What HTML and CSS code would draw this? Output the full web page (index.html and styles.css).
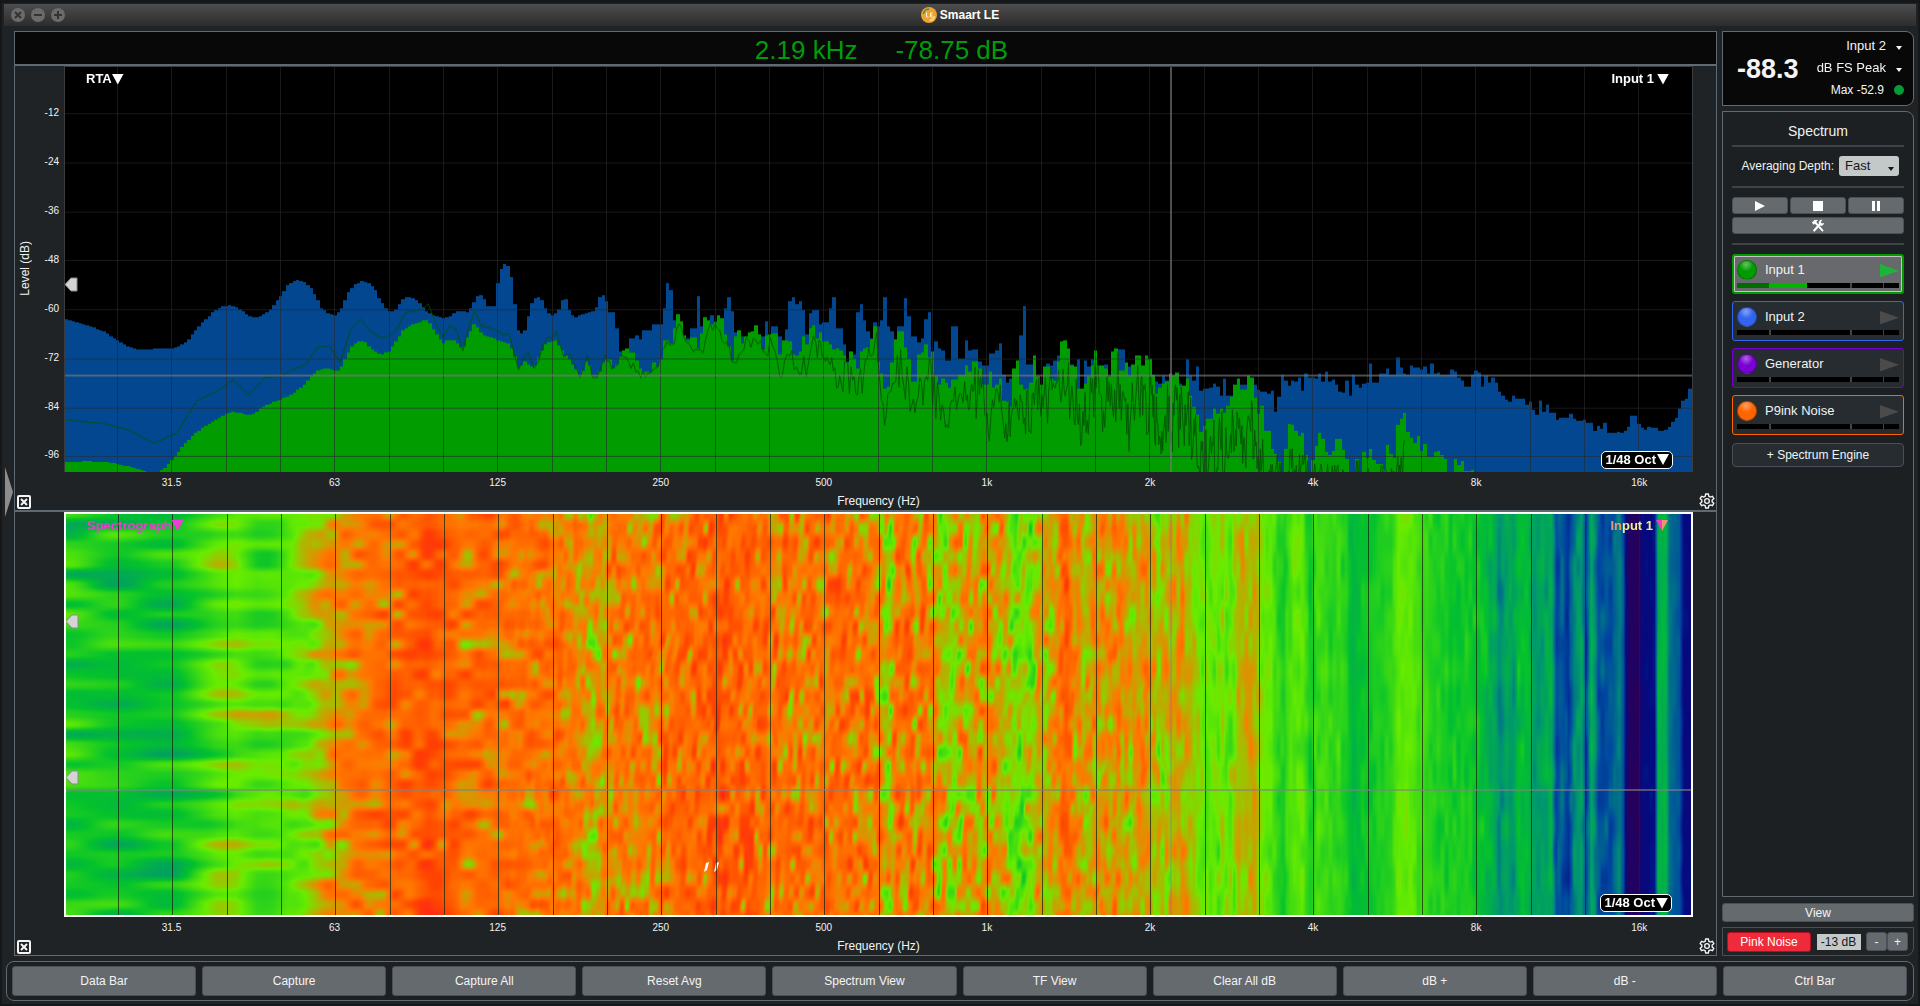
FILE: index.html
```html
<!DOCTYPE html>
<html lang="en">
<head>
<meta charset="utf-8">
<title>Smaart LE</title>
<link rel="stylesheet" href="styles.css">
</head>
<body>
<div class="window">
  <header class="titlebar">
    <div class="window-buttons">
      <button aria-label="Close"><svg viewBox="0 0 14 14"><path d="M4 4l6 6M10 4l-6 6"/></svg></button>
      <button aria-label="Minimize"><svg viewBox="0 0 14 14"><path d="M3 7h8"/></svg></button>
      <button aria-label="Zoom"><svg viewBox="0 0 14 14"><path d="M3 7h8M7 3v8"/></svg></button>
    </div>
    <svg class="app-icon" viewBox="0 0 16 16"><circle cx="8" cy="8" r="8" fill="#efa22d"/><path d="M2.500 7A5.500 5.500 0 0 1 8 2" fill="none" stroke="#2d8f68" stroke-width="1.500"/><path d="M13.500 9a5.500 5.500 0 0 1-5 4.500" fill="none" stroke="#ffdb7c" stroke-width="1.500"/><path d="M5.500 5.500v4.500h2M11.500 6h-2v4h2M9.500 8h2" fill="none" stroke="#fff3d8"/></svg>
    <h1>Smaart LE</h1>
  </header>

  <div class="workspace">
    <button class="drawer-handle" aria-label="Show data bar"><svg viewBox="0 0 8 50"><path d="M0 0L8 25L0 50z" fill="#8d8d8d"/></svg></button>
    <main class="graphs">
      <div class="readout"><span>2.19 kHz</span><span>-78.75 dB</span></div>

      <section class="pane">
        <div class="y-axis">
          <span class="y-title">Level (dB)</span>
          <ol class="y-ticks"><li>-12</li><li>-24</li><li>-36</li><li>-48</li><li>-60</li><li>-72</li><li>-84</li><li>-96</li></ol>
        </div>
        <div class="plot rta">
          <canvas id="rta" width="1627" height="403"></canvas>
          <button class="plot-label at-left">RTA<i class="down"></i></button>
          <button class="plot-label at-right">Input 1<i class="down"></i></button>
          <button class="banding">1/48 Oct<i class="down"></i></button>
          <svg class="marker rta-marker" viewBox="0 0 13 15"><path d="M0 7.500L6 1h6v13H6z"/></svg>
        </div>
        <div class="x-axis">
          <ol class="x-ticks"><li>31.5</li><li>63</li><li>125</li><li>250</li><li>500</li><li>1k</li><li>2k</li><li>4k</li><li>8k</li><li>16k</li></ol>
          <span>Frequency (Hz)</span>
        </div>
        <button class="close-pane" aria-label="Close pane"><svg viewBox="0 0 14 14"><rect x="1" y="1" width="12" height="12" rx="1"/><path d="M4 4l6 6M10 4l-6 6"/></svg></button>
        <button class="pane-settings" aria-label="Pane settings"><svg viewBox="0 0 24 24"><path d="M10 1.500h4l.7 3.300 2.300 1.300 3.200-1.100 2 3.500-2.500 2.200v2.600l2.500 2.200-2 3.500-3.200-1.100-2.300 1.300-.7 3.300h-4l-.7-3.300L7 17.900 3.800 19l-2-3.500 2.500-2.200v-2.600L1.800 8.500l2-3.500L7 6.100l2.300-1.300z"/><circle cx="12" cy="12" r="3.500"/></svg></button>
      </section>

      <section class="pane">
        <div class="y-axis"></div>
        <div class="plot spectrograph">
          <canvas id="spectrograph" width="1625" height="401"></canvas>
          <button class="plot-label at-left magenta">Spectrograph<i class="down"></i></button>
          <button class="plot-label at-right tinted"><b>In</b>put 1<i class="down"></i></button>
          <button class="banding">1/48 Oct<i class="down"></i></button>
          <svg class="marker high-marker" viewBox="0 0 13 15"><path d="M0 7.500L6 1h6v13H6z"/></svg>
          <svg class="marker low-marker" viewBox="0 0 13 15"><path d="M0 7.500L6 1h6v13H6z"/></svg>
        </div>
        <div class="x-axis">
          <ol class="x-ticks"><li>31.5</li><li>63</li><li>125</li><li>250</li><li>500</li><li>1k</li><li>2k</li><li>4k</li><li>8k</li><li>16k</li></ol>
          <span>Frequency (Hz)</span>
        </div>
        <button class="close-pane" aria-label="Close pane"><svg viewBox="0 0 14 14"><rect x="1" y="1" width="12" height="12" rx="1"/><path d="M4 4l6 6M10 4l-6 6"/></svg></button>
        <button class="pane-settings" aria-label="Pane settings"><svg viewBox="0 0 24 24"><path d="M10 1.500h4l.7 3.300 2.300 1.300 3.200-1.100 2 3.500-2.500 2.200v2.600l2.500 2.200-2 3.500-3.200-1.100-2.300 1.300-.7 3.300h-4l-.7-3.300L7 17.900 3.800 19l-2-3.500 2.500-2.200v-2.600L1.800 8.500l2-3.500L7 6.100l2.300-1.300z"/><circle cx="12" cy="12" r="3.500"/></svg></button>
      </section>
    </main>

    <aside class="sidebar">
      <section class="level-meter">
        <strong>-88.3</strong>
        <div class="level-options">
          <div class="picker"><select aria-label="Meter input"><option>Input 2</option></select></div>
          <div class="picker"><select aria-label="Meter scale"><option>dB FS Peak</option></select></div>
          <div class="max">Max -52.9 <i></i></div>
        </div>
      </section>

      <section class="control">
        <h2>Spectrum</h2>
        <hr>
        <div class="averaging">
          <label for="depth">Averaging Depth:</label>
          <div class="picker light"><select id="depth"><option>Fast</option></select></div>
        </div>
        <hr>
        <div class="transport">
          <button aria-label="Play"><svg viewBox="0 0 12 12"><path d="M1 1l10 5-10 5z"/></svg></button>
          <button aria-label="Stop"><svg viewBox="0 0 12 12"><path d="M1 1h10v10H1z"/></svg></button>
          <button aria-label="Pause"><svg viewBox="0 0 12 12"><path d="M2 1h3v10H2zM7 1h3v10H7z"/></svg></button>
          <button class="tools" aria-label="Settings"><svg viewBox="0 0 16 16"><path d="M1 4l3-3h4L6 3.500l8.500 9.500-1.500 1.500L4.500 5.500 3 6.500z"/><path d="M15 4.500a3.500 3.500 0 0 1-4.500 3L4 14.500 2 13 9 5.500A3.500 3.500 0 0 1 13 1l-2 2.500 1.500 1.500z"/></svg></button>
        </div>
        <hr>
        <div class="engines">
          <article class="engine green selected">
            <i class="dot"></i><span>Input 1</span>
            <button aria-label="Run Input 1"><svg viewBox="0 0 17 12"><path d="M0 0l17 6-17 6z"/></svg></button>
            <div class="meter"><b style="width:20%"></b><b style="width:23%"></b></div>
          </article>
          <article class="engine blue">
            <i class="dot"></i><span>Input 2</span>
            <button aria-label="Run Input 2"><svg viewBox="0 0 17 12"><path d="M0 0l17 6-17 6z"/></svg></button>
            <div class="meter"></div>
          </article>
          <article class="engine purple">
            <i class="dot"></i><span>Generator</span>
            <button aria-label="Run Generator"><svg viewBox="0 0 17 12"><path d="M0 0l17 6-17 6z"/></svg></button>
            <div class="meter"></div>
          </article>
          <article class="engine orange">
            <i class="dot"></i><span>P9ink Noise</span>
            <button aria-label="Run P9ink Noise"><svg viewBox="0 0 17 12"><path d="M0 0l17 6-17 6z"/></svg></button>
            <div class="meter"></div>
          </article>
          <button class="add-engine">+ Spectrum Engine</button>
        </div>
      </section>

      <button class="view">View</button>
      <section class="generator">
        <button class="noise">Pink Noise</button>
        <input type="text" value="-13 dB" aria-label="Generator level">
        <div class="steps"><button aria-label="Quieter">-</button><button aria-label="Louder">+</button></div>
      </section>
    </aside>
  </div>

  <nav class="command-bar">
    <button>Data Bar</button><button>Capture</button><button>Capture All</button><button>Reset Avg</button><button>Spectrum View</button><button>TF View</button><button>Clear All dB</button><button>dB +</button><button>dB -</button><button>Ctrl Bar</button>
  </nav>
</div>
<script src="graphs.js"></script>
</body>
</html>
```

FILE: styles.css
```css
* { box-sizing: border-box; }

body {
  margin: 0;
  background: #1f2326;
  color: #f0f2f3;
  font: 12px/16px "Liberation Sans", Arial, sans-serif;
}

button, select, input { font: inherit; color: inherit; margin: 0; padding: 0; border: 0; background: none; }
h1, h2, ol { margin: 0; padding: 0; list-style: none; }
svg, canvas { display: block; }

.window {
  display: flex;
  flex-direction: column;
  min-height: 100vh;
  border: solid #14181b;
  border-width: 3px 2px 2px;
  padding: 1px 2px 3px;
}

.titlebar {
  position: relative;
  display: flex;
  align-items: center;
  justify-content: center;
  gap: 3px;
  height: 22px;
  background: linear-gradient(#4d4d4d, #2c2c2c);
}
.titlebar h1 { font-size: 12px; font-weight: bold; color: #fff; }
.app-icon { width: 16px; height: 16px; }
.window-buttons { position: absolute; left: 7px; top: 4px; display: flex; gap: 6px; }
.window-buttons button { width: 14px; height: 14px; border-radius: 50%; background: #6b6b6b; }
.window-buttons path { stroke: #333; stroke-width: 2; }

.workspace { position: relative; flex: 1; display: flex; gap: 5px; padding: 5px 2px 5px 10px; }
.drawer-handle { position: absolute; left: 1px; top: 441px; width: 8px; height: 50px; }

.graphs { flex: 1; min-width: 0; display: flex; flex-direction: column; border: 1px solid #5f6a72; }
.readout {
  display: flex;
  justify-content: center;
  gap: 38px;
  padding-left: 32px;
  height: 34px;
  border-bottom: 2px solid #5f6a72;
  background: #080808;
  color: #009c0c;
  font-size: 26px;
  line-height: 36px;
}

.pane {
  position: relative;
  flex: 1;
  display: grid;
  grid-template: 1fr 38px / 49px 1fr 23px;
}
.pane + .pane { border-top: 2px solid #5f6a72; }
.y-axis { display: flex; justify-content: space-between; align-items: stretch; padding: 0 5px 0 2px; }
.y-title { align-self: center; writing-mode: vertical-rl; transform: rotate(180deg); }
.y-ticks { flex: 1; display: flex; flex-direction: column; justify-content: space-between; padding: 47px 0 16px; font-size: 10px; text-align: right; }
.y-ticks li { height: 0; line-height: 0; }

.plot { position: relative; min-width: 0; min-height: 0; grid-column: 2; }
.plot canvas { position: absolute; inset: 0; width: 100%; height: 100%; }
.rta { border: solid #3a3d40; border-width: 1px 1px 0; }
.spectrograph { border: 2px solid #fff; }
.x-axis { grid-column: 2; text-align: center; }
.x-axis span { display: block; line-height: 14px; }
.x-ticks { display: flex; justify-content: space-between; padding: 0 3.3% 0 6.6%; font-size: 10px; line-height: 22px; }
.x-ticks li { width: 0; display: flex; justify-content: center; white-space: nowrap; }

.plot-label { position: absolute; top: 4px; display: flex; align-items: center; font-size: 13px; font-weight: bold; color: #fff; }
.at-left { left: 21px; }
.at-right { right: 23px; gap: 3px; }
.down { width: 12px; height: 11px; background: currentColor; clip-path: polygon(0 0, 100% 0, 50% 100%); }
.magenta { color: #f03cd2; }
.tinted { color: #eef08c; gap: 0; }
.tinted b { color: #f0966e; }
.tinted .down { margin-left: 3px; background: linear-gradient(90deg, #f03cc8 50%, #f0966e 50%); }
.banding {
  position: absolute; right: 19px; bottom: 3px;
  display: flex; align-items: center; gap: 1px;
  padding: 0 3px;
  border: 1px solid #fff; border-radius: 5px;
  background: #000; color: #fff;
  font-size: 13px; font-weight: bold;
}
.marker { position: absolute; left: 0; width: 13px; height: 15px; fill: #d4d4d4; stroke: #8a8a8a; }
.rta-marker { top: 52%; }
.high-marker { top: 25%; }
.low-marker { top: 64%; }

.close-pane, .pane-settings { position: absolute; bottom: 1px; fill: none; stroke: #f4f4f4; }
.close-pane { left: 2px; width: 14px; height: 14px; stroke-width: 2; }
.pane-settings { right: 1px; width: 16px; height: 16px; stroke-width: 2; }

.sidebar { width: 192px; display: flex; flex-direction: column; gap: 5px; }
.level-meter {
  display: flex; justify-content: space-between;
  height: 75px;
  padding: 3px 9px 0 14px;
  border: 1px solid #5f6a72; border-radius: 0 8px 8px 0;
  background: #080808; color: #f4f4f4;
}
.level-meter strong { font-size: 27px; line-height: 68px; }
.level-options { display: flex; flex-direction: column; font-size: 13px; line-height: 22px; align-items: flex-end; }
.picker { position: relative; display: flex; }
.picker select { appearance: none; height: 22px; padding-right: 18px; text-align-last: right; }
.picker::after { content: ""; position: absolute; right: 2px; top: 11px; border: 3px solid transparent; border-top: 4px solid currentColor; border-bottom: 0; pointer-events: none; }
.max { display: flex; align-items: center; gap: 10px; font-size: 12px; }
.max i { width: 10px; height: 10px; border-radius: 50%; background: #049a36; }

.control { flex: 1; padding: 10px 9px; border: 1px solid #5f6a72; border-radius: 0 8px 0 0; background: #1c2022; }
.control h2 { font-size: 14px; font-weight: normal; line-height: 18px; text-align: center; margin-bottom: 5px; }
.control hr { height: 2px; margin: 0; border: 0; background: #3d4348; }
.averaging { display: flex; justify-content: flex-end; align-items: center; gap: 5px; padding: 9px 5px 10px 0; white-space: nowrap; }
.light { border-radius: 3px; background: #c3c8c8; color: #14181a; font-size: 13px; }
.light select { width: 60px; height: 20px; padding: 0 0 0 6px; text-align-last: left; }
.light::after { right: 5px; }
.transport { display: grid; grid-template-columns: repeat(3, 1fr); gap: 3px 2px; padding: 9px 0; }
.transport button, .view, .steps button, .command-bar button { border: 1px solid #495057; border-radius: 3px; background: #656a6f; color: #f4f4f4; }
.transport button { display: flex; align-items: center; justify-content: center; height: 17px; fill: #fff; }
.transport svg { width: 12px; height: 12px; }
.transport .tools { grid-column: span 3; }
.tools svg { width: 14px; height: 14px; }

.engines { display: flex; flex-direction: column; gap: 7px; padding-top: 9px; }
.engine {
  display: grid;
  grid-template: 26px 5px / 20px 1fr 17px;
  align-items: center;
  column-gap: 8px;
  height: 40px;
  padding: 2px 4px 0;
  border: 1px solid var(--hue); border-radius: 3px;
  background: #272c30;
  font-size: 13px;
}
.selected { background: #67696c; border-width: 2px; padding: 1px 3px 0; box-shadow: inset 0 0 0 1px #c4c4c4; }
.green { --hue: #009c00; }
.blue { --hue: #3264f0; }
.purple { --hue: #7800d2; }
.orange { --hue: #ff6400; }
.dot { width: 20px; height: 20px; border-radius: 50%; background: radial-gradient(circle at 45% 20%, #ffffff66, #ffffff00 40%), var(--hue); border: 1px solid #00000044; }
.engine button { height: 12px; margin-left: -2px; fill: #4b4b4b; }
.selected button { fill: #1eb43c; }
.meter {
  grid-column: span 3;
  height: 5px;
  display: flex;
  background: linear-gradient(90deg, #000 20%, #444 20% 21%, #000 21% 70%, #444 70% 71%, #000 71% 90%, #444 90% 91%, #000 91%);
}
.meter b { background: #006c00; }
.meter b + b { background: #00b400; }
.add-engine { height: 24px; margin-top: 1px; border: 1px solid #495057; border-radius: 4px; background: #272c30; }

.view { height: 19px; margin-top: 1px; }
.generator {
  display: flex; align-items: center; justify-content: space-between;
  height: 29px;
  padding: 0 5px 0 4px;
  border: 1px solid #495057; border-radius: 0 0 8px 0;
}
.noise { width: 84px; height: 20px; border: 1px solid #b40f1e; border-radius: 3px; background: #ee2b3b; color: #fff; }
.generator input { width: 44px; height: 16px; background: #c3c8c8; color: #14181a; text-align: center; }
.steps { display: flex; }
.steps button { width: 21px; height: 19px; }

.command-bar {
  display: grid;
  grid-template-columns: repeat(10, 1fr);
  gap: 6px;
  margin: 0 2px;
  padding: 4px 6px 4px 5px;
  border: 1px solid #5f6a72; border-radius: 8px;
  background: #1c2022;
}
.command-bar button { height: 30px; }
```

FILE: graphs.js
```js
// Frequency grid: 1/3-octave lines, 163 px per octave, 48 bins per octave.
const OCTAVE = 163, LINE_1K = 921.4, BIN = OCTAVE / 48;

let seed = 7;
const random = () => (seed = (seed * 16807) % 2147483647) / 2147483647;

const pairs = text => text.trim().split(/\s+/).map(p => p.split(',').map(Number));
const segment = (offset, scale, text) => pairs(text).map(([x, y]) => [offset + x / scale, y / 3 + 183]);

function sample(points, x, stepped) {
  let i = 0;
  while (i < points.length - 1 && points[i + 1][0] <= x) i++;
  const a = points[i], b = points[i + 1];
  if (stepped || !b || x < a[0]) return a[1];
  return a[1] + (b[1] - a[1]) * (x - a[0]) / (b[0] - a[0]);
}

const low = t => segment(-15, 2.8, t), mid = t => segment(535, 2.8, t), high = t => segment(1075, 2.7034, t);

const peak = [low(`45,203 100,220 150,240 190,267 220,285 250,295 300,292 345,292 365,283 385,268 410,235 435,205 460,180 480,167 500,163 520,166 540,180 560,195 580,199 605,185 625,165 645,135 665,103 680,92 695,88 710,92 730,108 745,135 760,170 780,187 798,192 815,175 835,125 855,98 875,91 895,95 910,113 925,148 945,177 955,182 970,175 985,145 1005,136 1025,145 1045,167 1060,185 1080,195 1105,202 1120,195 1140,180 1170,182 1185,160 1200,130 1212,132 1225,165 1245,165 1250,120 1258,75 1268,40 1280,38 1288,55 1296,98 1304,180 1312,242 1328,247 1340,195 1352,145 1368,138 1380,150 1390,180 1410,193 1425,175 1432,150 1440,138 1448,150 1455,180 1470,200 1495,187 1525,180 1535,155 1542,130 1555,132 1562,165 1568,130`),
mid(`0,131 18,167 28,183 38,188 47,230 56,300 76,260 95,247 104,252 113,264 123,236 142,237 151,220 171,242 180,172 189,97 198,116 208,206 217,260 256,230 266,156 275,136 284,225 294,245 303,215 313,193 322,210 331,250 351,172 360,137 369,180 379,243 388,255 457,210 467,184 474,250 484,226 494,202 503,255 513,268 522,235 532,150 540,137 550,158 560,151 569,177 578,250 588,186 598,177 617,220 627,213 637,226 646,172 655,137 665,232 684,280 693,330 703,310 722,183 731,160 740,208 750,241 760,262 769,213 779,225 788,208 797,137 807,226 817,241 826,270 836,226 846,216 854,142 864,196 874,256 884,265 893,274 902,262 911,204 921,184 930,300 940,271 949,290 959,298 968,327 988,224 998,179 1007,322 1017,268 1027,298 1036,328 1045,294 1055,330 1065,313 1074,343 1084,350 1093,307 1103,298 1121,277 1130,370 1140,393 1149,381 1159,360 1178,252 1187,164 1196,340 1215,345 1225,375 1235,398 1244,345 1254,337 1264,341 1273,328 1283,313 1292,340 1330,345 1340,323 1348,410 1358,328 1368,345 1377,325 1387,400 1405,345 1415,340 1424,375 1454,294 1464,288 1473,345 1483,360 1500,380`),
high(`0,375 45,390 53,396 62,373 71,388 80,400 108,395 117,402 126,325 135,373 144,388 153,345 162,418 173,412 182,410 191,408 200,395 209,405 218,432 227,382 236,432 255,400 310,400 319,413 328,419 346,425 355,418 364,479 373,435 382,369 391,388 400,402 410,388 421,391 430,378 439,418 448,367 457,379 475,382 484,367 493,389 502,360 511,390 520,384 529,400 539,420 548,424 557,387 566,432 575,370 584,400 593,408 602,396 611,393 620,337 629,392 647,388 650,367 667,352 676,368 685,369 695,317 704,347 713,365 722,370 731,343 740,348 758,354 767,346 776,367 786,337 795,365 804,362 813,368 840,355 850,361 859,378 868,388 877,404 895,368 905,357 914,363 923,405 933,373 942,392 951,377 960,394 969,419 978,433 987,443 996,449 1005,433 1014,442 1041,459 1050,450 1059,473 1070,489 1079,448 1088,480 1097,460 1106,482 1124,504 1133,498 1160,487 1170,500 1180,506 1195,504 1206,513 1225,538 1234,522 1243,531 1252,512 1262,544 1290,540 1300,543 1308,538 1317,525 1326,493 1344,517 1353,528 1362,533 1368,524 1377,527 1400,536 1408,538 1414,535 1425,538 1428,525 1436,511 1446,498 1455,470 1464,448 1473,440 1482,412`)];

const live = [low(`45,630 110,628 160,631 200,638 240,650 280,660 305,660 325,645 345,620 360,600 380,572 410,542 440,520 480,495 500,482 520,481 545,488 565,488 585,475 605,460 630,450 660,437 690,418 710,402 730,375 750,357 770,350 790,353 803,361 815,350 830,313 850,278 868,268 885,275 905,298 930,308 950,300 970,268 990,235 1010,223 1045,208 1060,208 1075,235 1100,277 1115,265 1135,268 1155,297 1170,255 1190,215 1210,250 1240,260 1260,270 1285,275 1300,310 1313,353 1330,330 1355,350 1370,315 1385,280 1400,272 1418,265 1430,290 1450,320 1465,340 1485,375 1505,320 1520,375 1535,375 1555,315 1568,345`),
mid(`0,340 9,310 20,325 30,350 38,340 48,315 57,298 67,290 76,302 86,302 103,328 113,350 123,360 133,362 143,332 153,345 162,325 172,292 180,267 190,275 208,230 217,190 227,210 236,252 246,268 256,258 266,288 275,292 284,245 294,198 303,208 313,218 322,213 331,193 341,202 350,250 360,285 369,327 379,255 388,238 398,277 408,255 417,243 427,241 436,222 446,250 455,293 465,252 474,250 484,246 494,302 503,310 513,266 523,272 532,270 541,310 550,312 560,300 569,256 578,278 588,232 598,223 607,260 617,243 627,270 637,296 646,280 655,294 665,291 674,298 684,313 693,332 703,300 712,320 722,350 731,300 740,292 750,287 760,263 769,226 778,330 788,366 797,410 807,405 817,332 826,265 836,241 846,290 854,289 864,322 874,390 884,320 893,310 902,304 911,280 921,318 930,300 940,375 949,400 959,381 968,393 978,409 988,384 998,343 1007,369 1017,342 1027,360 1036,350 1045,330 1055,352 1065,342 1074,398 1084,392 1093,360 1102,409 1112,398 1121,380 1130,447 1140,451 1150,465 1159,350 1168,328 1178,400 1187,415 1196,410 1206,394 1215,311 1225,375 1235,400 1244,345 1263,380 1273,388 1283,330 1292,271 1302,268 1311,290 1320,343 1330,345 1339,410 1358,395 1368,375 1377,342 1387,296 1396,343 1415,350 1424,375 1434,300 1443,290 1454,358 1464,345 1473,333 1482,372 1492,338 1501,312`),
high(`0,297 7,343 16,313 26,322 34,369 43,427 53,409 62,396 71,390 80,367 89,373 98,364 108,402 126,382 135,433 144,465 153,490 162,540 173,522 182,502 200,470 209,485 218,472 227,483 236,463 245,435 255,400 264,382 273,414 292,373 301,378 310,437 319,487 328,462 337,538 355,590 364,606 373,630 383,660 393,590 402,515 411,518 420,538 430,551 438,543 447,610 457,660 466,625 475,582 484,543 493,560 502,600 511,610 520,597 530,562 548,594 557,622 566,660 584,622 593,660 602,600 611,618 620,590 630,625 640,637 658,650 667,580 676,605 685,618 695,519 704,500 713,483 722,540 731,557 740,573 749,551 758,598 767,575 777,614 795,600 804,597 813,610 822,622 831,660 850,622 860,640 870,627 879,657 895,654 905,665`)];

const fftLow = low(`45,505 150,515 222,535 291,575 355,543 412,447 468,419 513,385 558,430 602,378 648,372 683,353 716,340 748,288 782,283 812,333 842,234 870,203 896,240 924,258 947,258 972,233 994,185 1045,174 1059,158 1082,220 1101,258 1118,223 1137,233 1156,298 1172,230 1190,178 1207,223 1235,230 1270,250 1285,247 1312,355 1328,315 1340,305 1355,350 1368,330 1380,280 1392,258 1405,260 1417,242 1438,315 1455,308 1485,377 1505,312 1520,378 1532,378 1555,310`);

// Typical depth of the live FFT trace at a frequency, and how far it swings.
const fftMean = [...mid(`0,335 60,310 130,375 180,290 220,220 260,290 280,300 320,220 350,250 375,340 410,270 440,260 460,320 480,270 500,345 530,300 560,370 600,260 640,340 680,380 720,400 770,290 800,480 830,310 880,450 920,360 945,460 980,490 1020,400 1060,420 1090,490 1110,440 1140,550 1165,400 1200,500 1220,410 1250,460 1300,370 1350,510 1390,400 1430,480 1450,400 1475,490 1510,420`),
  ...high(`10,450 50,520 90,480 130,530 160,640 200,620 240,600 265,530 280,580 298,510 320,620 345,680 395,680 405,640 430,640 450,680 690,690 700,650 713,630 725,660 740,700`)];
const fftSwing = pairs('542,6 700,14 780,22 900,34 1075,44 1140,50 1200,34 1627,20');

function level(trace, x) {
  if (x < 543) return sample(trace[0], x, false);
  return sample(x < 1075 ? trace[1] : trace[2], x, true);
}

function grid(ctx, height, color) {
  ctx.fillStyle = color;
  for (let n = -16; n <= 12; n++) ctx.fillRect(Math.round(LINE_1K + n * OCTAVE / 3), 0, 1, height);
}

function drawRta() {
  const ctx = document.getElementById('rta').getContext('2d');
  ctx.fillStyle = '#000';
  ctx.fillRect(0, 0, 1627, 403);
  for (const [trace, color] of [[peak, '#02478f'], [live, '#009c00']]) {
    ctx.fillStyle = color;
    for (let x = 0; x < 1627; x += BIN) {
      const left = Math.round(x), y = Math.round(level(trace, x + BIN / 2));
      ctx.fillRect(left, y, Math.round(x + BIN) - left, 403 - y);
    }
  }
  ctx.strokeStyle = 'rgba(0,84,0,.85)';
  ctx.beginPath();
  fftLow.forEach(([x, y]) => ctx.lineTo(x, y));
  for (let x = 542; x < 1340; x += x < 750 ? 2.4 : x < 900 ? 1.6 : x < 1075 ? 1.1 : .8) {
    const y = sample(fftMean, x, false) + (random() + random() - 1) * sample(fftSwing, x, false);
    ctx.lineTo(x, Math.max(level(live, x) + 1, Math.min(405, y)));
  }
  ctx.stroke();
  grid(ctx, 403, 'rgba(42,42,46,.6)');
  for (let n = 0; n < 8; n++) ctx.fillRect(0, Math.round(46 + n * 48.75), 1627, 1);
  ctx.fillStyle = 'rgba(120,120,120,.65)';
  ctx.fillRect(0, 306, 1627, 2);
  ctx.fillRect(1105, 0, 2, 403);
}

// Colour ramp of the spectrograph, from quiet to loud.
const ramp = [[42, 0, 88], [4, 10, 128], [0, 74, 160], [0, 150, 112], [4, 194, 44], [104, 236, 0], [255, 120, 0], [255, 70, 0], [255, 36, 24]];

const bands = pairs(`0,4.2 60,4.0 110,4.0 130,4.4 150,4.8 170,5.0 190,4.8 215,4.9 240,5.1 255,5.5 275,5.9 300,6.2 340,6.4 362,6.9 380,6.5 395,6.1 430,6.2 470,6.2 490,6.1 515,5.8 527,5.5 545,6.1 575,5.9 590,6 600,6.3 640,6.4 652,6.9 665,6.4 700,6.3 720,6.1 770,6.2 800,6.1 812,6 818,5.4 824,5.5 830,6.2 845,6.1 849,5.6 855,6.1 867,5.9 873,5.3 885,5.3 895,5.6 920,5.8 935,5.6 943,5.2 950,5 965,5.1 972,5.8 980,5.4 990,5.9 1000,6.5 1008,5.9 1018,5.5 1030,5.9 1055,5.8 1065,5.5 1080,5.8 1090,5.4 1105,5.5 1115,5.7 1122,5.5 1130,5.1 1138,4.9 1150,5 1165,5 1172,5.4 1185,5.6 1190,5.4 1195,5 1205,4.8 1212,4.4 1218,4.2 1224,4.8 1236,4.9 1244,4.1 1250,4.6 1260,4.5 1264,4.4 1273,4.5 1280,4.2 1286,3.7 1295,4 1303,4.1 1325,4.4 1332,5 1345,4.9 1352,4.6 1370,4.3 1385,4.1 1400,4.2 1412,4 1420,3.7 1428,3.5 1433,2.8 1440,3.4 1447,3.1 1452,3.8 1462,3.8 1468,3.1 1485,3.4 1490,1.9 1495,2.3 1502,1.8 1508,2.8 1515,3.1 1520,1.9 1525,3.5 1532,2.1 1545,2.1 1553,2.7 1557,2 1561,.3 1572,.1 1576,.9 1588,1.1 1592,3.6 1599,3.7 1603,2.5 1613,2.1 1617,1 1627,.9`);

function noiseField(cellX, cellY) {
  const cols = Math.ceil(1800 / cellX) + 3, rows = Math.ceil(410 / cellY) + 3;
  const values = Float32Array.from({ length: cols * rows }, () => (random() + random() - 1) * 1.6);
  const ease = t => t * t * (3 - 2 * t);
  return (x, y) => {
    const gx = x / cellX, gy = y / cellY, ix = Math.floor(gx), iy = Math.floor(gy);
    const fx = ease(gx - ix), fy = ease(gy - iy), i = iy * cols + ix;
    return (values[i] * (1 - fx) + values[i + 1] * fx) * (1 - fy) + (values[i + cols] * (1 - fx) + values[i + cols + 1] * fx) * fy;
  };
}

function drawSpectrograph() {
  const width = 1625, height = 401;
  const ctx = document.getElementById('spectrograph').getContext('2d');
  const image = ctx.createImageData(width, height);
  const wide = noiseField(50, 10), medium = noiseField(14, 10), narrow = noiseField(5, 14), tall = noiseField(4, 26);
  const drift = noiseField(40, 40);
  const blend = (x, from, to) => Math.max(0, Math.min(1, (x - from) / (to - from)));
  const strength = pairs('0,.45 120,.45 200,.45 260,.65 360,.5 480,.65 590,.65 700,.6 830,.65 1100,.6 1135,.3 1170,.35 1200,.2 1350,.12 1420,.25 1540,.25 1560,.12 1627,.1');
  for (let x = 0; x < width; x++) {
    const base = sample(bands, x, false), amount = sample(strength, x, false);
    const a = blend(x, 200, 330), b = blend(x, 400, 600), c = blend(x, 900, 1200);
    for (let y = 0; y < height; y++) {
      const slant = x + drift(x, y) * 2 + y * .05;
      let n = wide(x, y) * (1 - a);
      if (a > 0) n += medium(slant, y) * a * (1 - b);
      if (b > 0) n += narrow(slant, y) * b * (1 - c);
      if (c > 0) n += tall(x, y) * c;
      const v = Math.max(0, Math.min(7.99, base + n * amount * 1.3));
      const k = Math.floor(v), t = v - k, from = ramp[k], to = ramp[k + 1], p = (y * width + x) * 4;
      for (let ch = 0; ch < 3; ch++) image.data[p + ch] = from[ch] + (to[ch] - from[ch]) * t;
      image.data[p + 3] = 255;
    }
  }
  ctx.putImageData(image, 0, 0);
  ctx.fillStyle = '#fff';
  for (const x of [638, 648]) {
    ctx.beginPath();
    ctx.moveTo(x + 2, 349); ctx.lineTo(x + 5, 348); ctx.lineTo(x + 3, 356); ctx.lineTo(x, 358);
    ctx.fill();
  }
  grid(ctx, height, 'rgba(24,40,12,.75)');
  ctx.fillStyle = 'rgba(130,130,130,.6)';
  ctx.fillRect(0, 275, width, 2);
  ctx.fillStyle = 'rgba(130,130,130,.35)';
  ctx.fillRect(1104, 0, 2, height);
}

drawRta();
drawSpectrograph();
```
